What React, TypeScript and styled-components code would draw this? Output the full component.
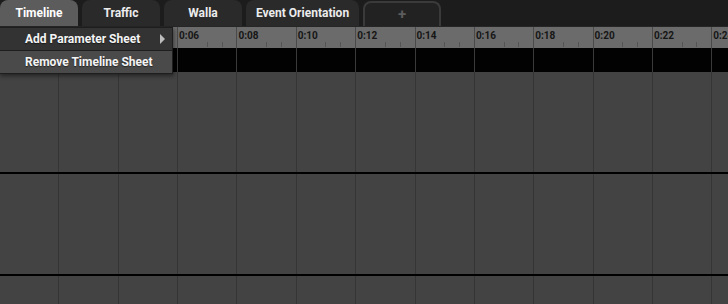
import React from "react";
import styled, { createGlobalStyle } from "styled-components";

const GlobalStyle = createGlobalStyle`
  html, body { margin: 0; padding: 0; background: #1c1c1c; overflow: hidden; }
  * { box-sizing: border-box; }
`;

const STEP = 59.36;
const COLS = 13;

const Page = styled.div`
  width: 728px;
  height: 304px;
  display: flex;
  flex-direction: column;
  background: #1c1c1c;
  font-family: Roboto, "Liberation Sans", sans-serif;
  overflow: hidden;
`;

const TabBar = styled.div`
  display: flex;
  align-items: flex-end;
  gap: 4px;
  height: 26px;
  flex: none;
`;

const Tab = styled.div<{ $active?: boolean }>`
  height: 26px;
  min-width: 78px;
  padding: 0 10px;
  display: flex;
  align-items: center;
  justify-content: center;
  border-radius: 8px 8px 0 0;
  background: ${(p) => (p.$active ? "#5c5c5c" : "#2a2a2a")};
  color: ${(p) => (p.$active ? "#ffffff" : "#ececec")};
  font-size: 12px;
  font-weight: 700;
  white-space: nowrap;
`;

const AddTab = styled.div`
  height: 25px;
  width: 78px;
  display: flex;
  align-items: center;
  justify-content: center;
  border: 2px solid #3a3a3a;
  border-bottom: none;
  border-radius: 8px 8px 0 0;
  background: #222222;
  color: #5c5c5c;
  font-size: 15px;
  font-weight: 700;
  padding-bottom: 1px;
`;

const TimelineArea = styled.div`
  position: relative;
  flex: 1;
  display: flex;
  flex-direction: column;
  overflow: hidden;
`;

const Row = styled.div`
  display: flex;
  margin-left: -1px;
  flex: none;
`;

const RulerRow = styled(Row)`
  height: 22px;
  background: #6b6b6b;
  border-top: 1px solid #262626;
`;

const RulerCell = styled.div<{ $covered?: boolean }>`
  flex: none;
  width: ${STEP}px;
  height: 100%;
  border-left: 1px solid #4a4a4a;
  padding: 3px 0 0 1px;
  font-size: 10px;
  line-height: 12px;
  font-weight: 700;
  color: #161616;
  visibility: visible;
  background:
    linear-gradient(#555555, #555555) ${STEP / 2 - 1}px 15px / 1px 5px no-repeat,
    linear-gradient(#555555, #555555) ${(STEP * 3) / 4 - 1}px 15px / 1px 5px no-repeat;
`;

const RulerLabel = styled.span<{ $covered?: boolean }>`
  visibility: ${(p) => (p.$covered ? "hidden" : "visible")};
`;

const Lane = styled(Row)<{ $kind: "band" | "track"; $h?: number }>`
  height: ${(p) => (p.$h ? `${p.$h}px` : "auto")};
  flex: ${(p) => (p.$h ? "none" : "1")};
  background: ${(p) => (p.$kind === "band" ? "#020202" : "#434343")};
`;

const LaneCell = styled.div<{ $kind: "band" | "track" }>`
  flex: none;
  width: ${STEP}px;
  border-left: 1px solid ${(p) => (p.$kind === "band" ? "#3a3a3a" : "#353535")};
`;

const Separator = styled.div`
  height: 2px;
  flex: none;
  background: #000000;
`;

const Menu = styled.div`
  position: absolute;
  top: 1px;
  left: -1px;
  width: 174px;
  display: flex;
  flex-direction: column;
  border: 1px solid #1e1e1e;
  background: #1e1e1e;
  gap: 1px;
  box-shadow: 1px 2px 4px rgba(0, 0, 0, 0.45);
`;

const MenuItem = styled.div<{ $hover?: boolean }>`
  height: 22px;
  display: flex;
  align-items: center;
  justify-content: space-between;
  padding: 0 7px 0 25px;
  background: ${(p) => (p.$hover ? "#4a4a4a" : "#333333")};
  color: #f4f4f4;
  font-size: 12px;
  font-weight: 700;
  text-shadow: 0 1px 1px rgba(0, 0, 0, 0.5);
  white-space: nowrap;
`;

const SubArrow = styled.span`
  width: 0;
  height: 0;
  border-top: 5px solid transparent;
  border-bottom: 5px solid transparent;
  border-left: 5px solid #bdbdbd;
`;

const labels = Array.from({ length: COLS }, (_, i) => `0:${String(i * 2).padStart(2, "0")}`);

function Cells({ kind }: { kind: "band" | "track" }) {
  return (
    <>
      {labels.map((l) => (
        <LaneCell key={l} $kind={kind} />
      ))}
    </>
  );
}

export default function App() {
  return (
    <Page>
      <GlobalStyle />
      <TabBar>
        <Tab $active>Timeline</Tab>
        <Tab>Traffic</Tab>
        <Tab>Walla</Tab>
        <Tab>Event Orientation</Tab>
        <AddTab>+</AddTab>
      </TabBar>
      <TimelineArea>
        <RulerRow>
          {labels.map((l, i) => (
            <RulerCell key={l}>
              <RulerLabel $covered={i < 3}>{l}</RulerLabel>
            </RulerCell>
          ))}
        </RulerRow>
        <Lane $kind="band" $h={24}>
          <Cells kind="band" />
        </Lane>
        <Lane $kind="track" $h={100}>
          <Cells kind="track" />
        </Lane>
        <Separator />
        <Lane $kind="track" $h={100}>
          <Cells kind="track" />
        </Lane>
        <Separator />
        <Lane $kind="track">
          <Cells kind="track" />
        </Lane>
        <Menu>
          <MenuItem>
            Add Parameter Sheet
            <SubArrow />
          </MenuItem>
          <MenuItem $hover>Remove Timeline Sheet</MenuItem>
        </Menu>
      </TimelineArea>
    </Page>
  );
}
